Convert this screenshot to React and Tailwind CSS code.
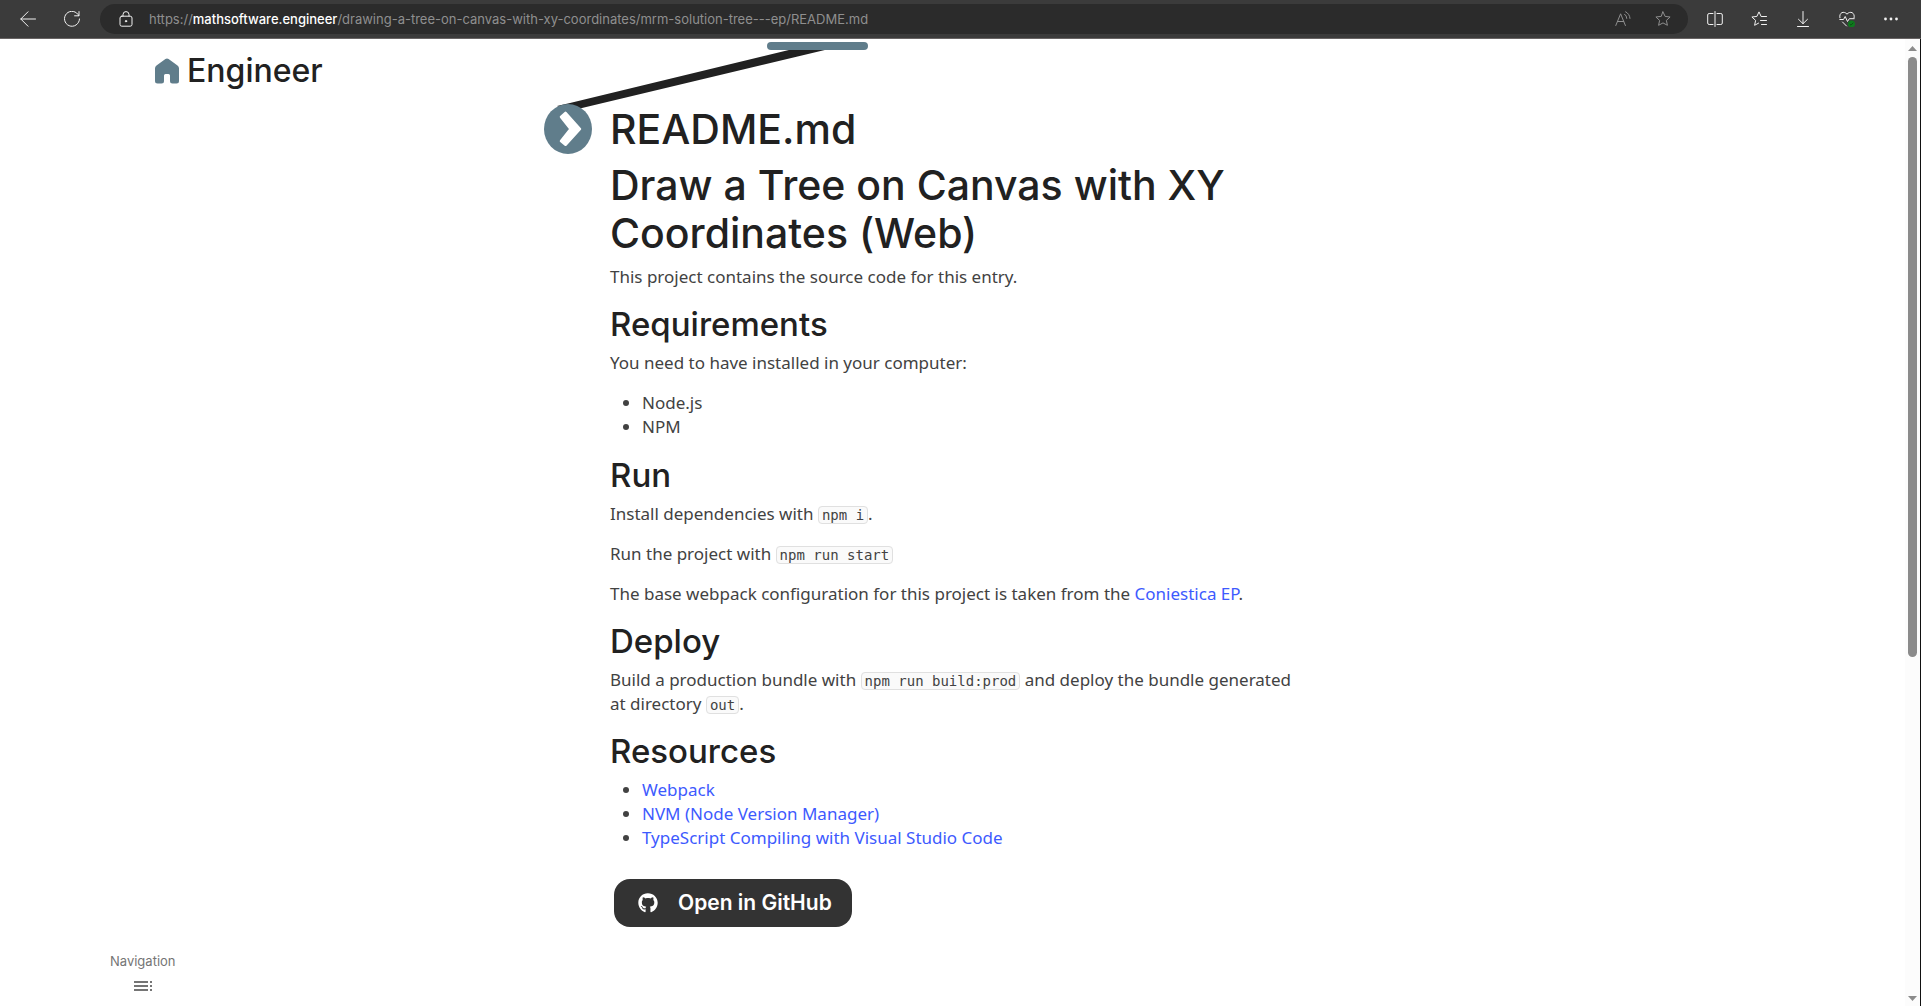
import { FaGithub } from "react-icons/fa";

function Icon({ children, className = "size-4" }) {
  return (
    <svg
      viewBox="0 0 16 16"
      className={className}
      fill="none"
      stroke="currentColor"
      strokeWidth="1"
      strokeLinecap="round"
      strokeLinejoin="round"
      aria-hidden="true"
    >
      {children}
    </svg>
  );
}

const STAR = "M8 .9l2.1 4.5 5 .6-3.7 3.4 1 4.9L8 11.9l-4.4 2.4 1-4.9L.9 6l5-.6z";

function ToolButton({ label, children }) {
  return (
    <button type="button" aria-label={label} className="flex h-full w-11 shrink-0 items-center justify-center">
      {children}
    </button>
  );
}

function BrowserBar() {
  return (
    <header className="flex h-[39px] shrink-0 items-center border-b border-[#686464] bg-[#3b3b3b] pr-2 pl-[6px] text-[#f2f2f2]">
      <ToolButton label="Back">
        <Icon><path d="M15.5 8H.8M8 .8L.8 8 8 15.2" /></Icon>
      </ToolButton>
      <ToolButton label="Refresh">
        <Icon><path d="M14.8 4.6A7.5 7.5 0 1 0 15.5 8M15 .6v4.2h-4.4" /></Icon>
      </ToolButton>
      <div className="ml-[6px] flex h-[30px] min-w-0 flex-1 items-center rounded-full bg-[#2b2b2b] pr-[3px]">
        <button type="button" aria-label="Site information" className="ml-[18px] shrink-0">
          <Icon>
            <rect x="2" y="5.2" width="12" height="10" rx="1.8" />
            <path d="M5 5V3.6a3 3 0 0 1 6 0V5" />
            <circle cx="8" cy="10.2" r=".7" fill="currentColor" />
          </Icon>
        </button>
        <div
          role="textbox"
          aria-label="Address"
          tabIndex={0}
          className="ml-[15px] min-w-0 flex-1 truncate font-['Inter',sans-serif] text-[13px] leading-5 text-[#8f8f8f]"
        >
          https://<span className="font-medium text-white">mathsoftware.engineer</span>/drawing-a-tree-on-canvas-with-xy-coordinates/mrm-solution-tree---ep/README.md
        </div>
        <button type="button" aria-label="Read aloud" className="flex w-9 shrink-0 justify-center text-[#8f8f8f]">
          <Icon>
            <path d="M.8 14.5L5.6 2.8l4.8 11.7M2.5 10.5h6.2M9.6 3.2a5 5 0 0 1 2.2 4.2M10.6.8a8 8 0 0 1 4.4 6.6" />
          </Icon>
        </button>
        <button type="button" aria-label="Add to favorites" className="flex w-11 shrink-0 justify-center text-[#8f8f8f]">
          <Icon><path d={STAR} /></Icon>
        </button>
      </div>
      <div className="ml-[5px] flex h-full items-center">
        <ToolButton label="Split screen">
          <Icon>
            <path d="M6 2.5H2.2A1.5 1.5 0 0 0 .7 4v8a1.5 1.5 0 0 0 1.5 1.5H6M10 2.5h3.8A1.5 1.5 0 0 1 15.3 4v8a1.5 1.5 0 0 1-1.5 1.5H10M8 .5v15" />
          </Icon>
        </ToolButton>
        <ToolButton label="Favorites">
          <Icon>
            <path d="M10 5.2L8 .9 5.9 5.4.9 6l3.7 3.4-1 4.9 4-2.200M10.500 5.500h5M9.500 9.500h6M10.500 13.500h5" />
          </Icon>
        </ToolButton>
        <ToolButton label="Downloads">
          <Icon><path d="M8 .5v12M3.500 8.300L8 12.700l4.500-4.400M2.500 15.500h11" /></Icon>
        </ToolButton>
        <ToolButton label="Browser essentials">
          <Icon>
            <path d="M.9 6.800C-.3 1.500 5-.5 8 3.200 11-.5 16.300 1.500 15.100 6.800M.8 8.500h3.700l1.700-3 2.300 5 1.800-2.800h4.900M3.500 11l4 4" />
            <circle cx="12.500" cy="13" r="3.500" fill="#0e7a1d" stroke="none" />
            <path d="M11 13.200l1 1 2-2.200" stroke="#0a4f12" />
          </Icon>
        </ToolButton>
        <ToolButton label="Settings and more">
          <Icon>
            <g fill="currentColor" stroke="none">
              <circle cx="2.500" cy="8" r="1.400" />
              <circle cx="8" cy="8" r="1.400" />
              <circle cx="13.500" cy="8" r="1.400" />
            </g>
          </Icon>
        </ToolButton>
      </div>
    </header>
  );
}

function TreeMark() {
  return (
    <svg
      viewBox="544 39 330 120"
      className="pointer-events-none absolute -left-[66px] top-0 h-[120px] w-[330px]"
      aria-hidden="true"
    >
      <path d="M557 106L570 103L793 49H829L582 108L568 112z" fill="#212121" />
      <rect x="767" y="42" width="101" height="8" rx="4" fill="#607d8b" />
      <ellipse cx="568" cy="129" rx="24" ry="25" fill="#607d8b" />
      <path
        d="M561 117l4.500-4.200L580 129l-14.500 15.800L561 141l9.500-12z"
        fill="#fff"
        stroke="#fff"
        strokeWidth="2.500"
        strokeLinejoin="round"
      />
    </svg>
  );
}

function H1({ children }) {
  return <h1 className="mb-2 font-['Inter',sans-serif] text-[41px] leading-[48px] font-medium text-[#212121]">{children}</h1>;
}

function H2({ children }) {
  return <h2 className="mb-2 font-['Inter',sans-serif] text-[33px] leading-[38px] font-medium text-[#212121]">{children}</h2>;
}

function Code({ children }) {
  return (
    <code className="rounded border border-[#e0e0e0] bg-[#fafafa] px-[3px] font-['DejaVu_Sans_Mono',monospace] text-sm leading-4">
      {children}
    </code>
  );
}

function Link({ children }) {
  return <a href="#" className="text-[#3d5afe]">{children}</a>;
}

function Article() {
  return (
    <article className="relative pt-[66px] font-['Noto_Sans',sans-serif] text-[17px] leading-6 text-[#424242]">
      <TreeMark />
      <H1>README.md</H1>
      <H1>Draw a Tree on Canvas with XY Coordinates (Web)</H1>
      <p className="mb-4">This project contains the source code for this entry.</p>
      <H2>Requirements</H2>
      <p className="mb-4">You need to have installed in your computer:</p>
      <ul className="mb-[17px] list-disc pl-8">
        <li>Node.js</li>
        <li>NPM</li>
      </ul>
      <H2>Run</H2>
      <p className="mb-4">Install dependencies with <Code>npm i</Code>.</p>
      <p className="mb-4">Run the project with <Code>npm run start</Code></p>
      <p className="mb-4">
        The base webpack configuration for this project is taken from the <Link>Coniestica EP</Link>.
      </p>
      <H2>Deploy</H2>
      <p className="mb-4">
        Build a production bundle with <Code>npm run build:prod</Code> and deploy the bundle generated at directory <Code>out</Code>.
      </p>
      <H2>Resources</H2>
      <ul className="mb-[29px] list-disc pl-8">
        <li><Link>Webpack</Link></li>
        <li><Link>NVM (Node Version Manager)</Link></li>
        <li><Link>TypeScript Compiling with Visual Studio Code</Link></li>
      </ul>
      <a
        href="#"
        className="ml-1 inline-flex h-12 items-center gap-5 rounded-2xl bg-[#333333] pr-5 pl-6 font-['Inter',sans-serif] text-[21px] font-semibold text-white"
      >
        <FaGithub className="size-5" aria-hidden="true" />
        Open in GitHub
      </a>
    </article>
  );
}

function Sidebar() {
  return (
    <aside className="flex flex-col items-start justify-between pt-3 pb-[13px]">
      <a href="#" className="ml-[155px] flex items-center gap-2 font-['Inter',sans-serif] text-[32px] leading-10 font-medium text-[#212121]">
        <svg viewBox="0 0 24 26" className="h-[26px] w-6" fill="#607d8b" aria-hidden="true">
          <path d="M10.400 1a3 3 0 0 1 3.200 0l8.900 6.500A3.500 3.500 0 0 1 24 10.300V23a2.500 2.500 0 0 1-2.500 2.500h-4A2.500 2.500 0 0 1 15 23v-5.500a1.500 1.500 0 0 0-1.500-1.500h-3A1.500 1.500 0 0 0 9 17.500V23a2.500 2.500 0 0 1-2.500 2.500h-4A2.500 2.500 0 0 1 0 23V10.300a3.500 3.500 0 0 1 1.500-2.800z" />
        </svg>
        Engineer
      </a>
      <button type="button" className="ml-[110px] flex flex-col items-center gap-2 font-['Inter',sans-serif] text-[13px] leading-5 text-[#757575]">
        Navigation
        <svg viewBox="0 0 18 14" className="h-[14px] w-[18px]" fill="currentColor" aria-hidden="true">
          <path d="M0 2h14v2H0zM0 6h14v2H0zM0 10h14v2H0zM16 2h2v2h-2zM16 6h2v2h-2zM16 10h2v2h-2z" />
        </svg>
      </button>
    </aside>
  );
}

function ScrollRail() {
  return (
    <div className="flex w-4 shrink-0 flex-col items-center border-r border-[#111111] bg-[#fcfcfc] py-1 text-[#8b8b8b]" aria-hidden="true">
      <svg viewBox="0 0 9 12" className="h-3 w-[9px] shrink-0" fill="currentColor"><path d="M4.500 3L9 8H0z" /></svg>
      <div className="mt-[2px] flex w-full flex-1 flex-col items-center">
        <div className="h-[64.2%] w-[9px] rounded-full bg-[#8b8b8b]" />
      </div>
      <svg viewBox="0 0 9 10" className="h-[10px] w-[9px] shrink-0" fill="currentColor"><path d="M0 4h9L4.500 9z" /></svg>
    </div>
  );
}

export default function App() {
  return (
    <div className="flex h-screen flex-col overflow-hidden bg-white">
      <BrowserBar />
      <div className="flex min-h-0 flex-1">
        <main className="grid min-w-0 flex-1 grid-cols-[1fr_minmax(0,685px)_1fr]">
          <Sidebar />
          <Article />
        </main>
        <ScrollRail />
      </div>
    </div>
  );
}
